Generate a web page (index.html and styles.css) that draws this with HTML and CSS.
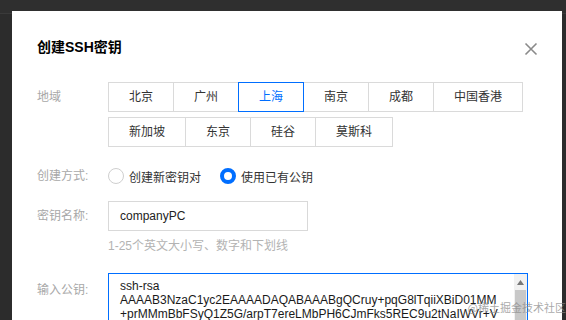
FILE: index.html
```html
<!DOCTYPE html>
<html lang="zh-CN">
<head>
<meta charset="utf-8">
<link rel="stylesheet" href="styles.css">
</head>
<body>
<div class="topstrip"></div>
<div class="dialog">
  <div class="title">创建SSH密钥</div>
  <svg class="close" width="14" height="14" viewBox="0 0 14 14"><path d="M1.5 1.5L12.5 12.5M12.5 1.5L1.5 12.5" stroke="#8a8a8a" stroke-width="1.6" fill="none"/></svg>

  <div class="row region-row">
    <div class="label">地域</div>
    <div class="regions">
      <div class="rline">
        <span class="rbtn">北京</span><span class="rbtn">广州</span><span class="rbtn active">上海</span><span class="rbtn">南京</span><span class="rbtn">成都</span><span class="rbtn">中国香港</span>
      </div>
      <div class="rline">
        <span class="rbtn">新加坡</span><span class="rbtn">东京</span><span class="rbtn">硅谷</span><span class="rbtn">莫斯科</span>
      </div>
    </div>
  </div>

  <div class="row radio-row">
    <div class="label">创建方式:</div>
    <div class="radios">
      <span class="radio"></span><span class="rtext">创建新密钥对</span>
      <span class="radio checked"></span><span class="rtext">使用已有公钥</span>
    </div>
  </div>

  <div class="row name-row">
    <div class="label">密钥名称:</div>
    <div class="input">companyPC</div>
  </div>
  <div class="hint">1-25个英文大小写、数字和下划线</div>

  <div class="row key-row">
    <div class="label key-label">输入公钥:</div>
    <div class="textarea">
      <div class="ta-text">
        <div>ssh-rsa</div>
        <div>AAAAB3NzaC1yc2EAAAADAQABAAABgQCruy+pqG8lTqiiXBiD01MM</div>
        <div>+prMMmBbFSyQ1Z5G/arpT7ereLMbPH6CJmFks5REC9u2tNaIWVr+V</div>
      </div>
      <div class="scrollbar">
        <div class="sb-btn"><svg width="7" height="5" viewBox="0 0 7 5"><path d="M0 5L3.5 0L7 5Z" fill="#777"/></svg></div>
        <div class="sb-thumb"></div>
      </div>
    </div>
  </div>
</div>
<div class="watermark">@稀土掘金技术社区</div>
</body>
</html>
```

FILE: styles.css
```css
html, body {
  margin: 0;
  padding: 0;
}
body {
  width: 566px;
  height: 320px;
  overflow: hidden;
  background: #2c2c2c;
  font-family: "Liberation Sans", Arial, "Noto Sans CJK SC", sans-serif;
  font-size: 12px;
  color: #333;
  position: relative;
}
.topstrip {
  height: 13px;
  background: #2f2f2f;
  border-bottom: 1px solid #3a3a3a;
  margin-bottom: -14px;
}
.dialog {
  position: relative;
  margin: 11px 0 0 12px;
  width: 550px;
  height: 309px;
  overflow: hidden;
  background: #fff;
  padding: 26px 0 0 25px;
  box-sizing: border-box;
}
.title {
  font-size: 14px;
  font-weight: bold;
  line-height: 20px;
  height: 20px;
  color: #000;
}
.close {
  position: absolute;
  right: 24px;
  top: 31px;
}
.row {
  display: flex;
  align-items: flex-start;
}
.label {
  width: 71px;
  flex: none;
  color: #a8a8a8;
  line-height: 30px;
  font-size: 12px;
}
.region-row {
  margin-top: 25px;
}
.regions {
  display: flex;
  flex-direction: column;
  gap: 5px;
}
.rline {
  display: flex;
}
.rbtn {
  display: block;
  height: 30px;
  line-height: 28px;
  box-sizing: border-box;
  border: 1px solid #dadada;
  padding: 0 20px;
  min-width: 66px;
  text-align: center;
  color: #333;
  margin-right: -1px;
  background: #fff;
  white-space: nowrap;
}
.rbtn.active {
  border-color: #006eff;
  color: #006eff;
  position: relative;
  z-index: 1;
}
.radio-row {
  margin-top: 14px;
}
.radios {
  display: flex;
  align-items: center;
  height: 30px;
}
.radio {
  width: 16px;
  height: 16px;
  box-sizing: border-box;
  border: 1px solid #cfcfcf;
  border-radius: 50%;
  margin-right: 5px;
}
.radio.checked {
  border: 4.5px solid #006eff;
}
.rtext {
  color: #333;
  margin-right: 19px;
}
.name-row {
  margin-top: 10px;
}
.input {
  width: 200px;
  height: 30px;
  box-sizing: border-box;
  border: 1px solid #d9d9d9;
  padding-left: 11px;
  line-height: 28px;
  color: #222;
}
.hint {
  margin: 6px 0 0 71px;
  line-height: 18px;
  color: #b3b3b3;
}
.key-row {
  margin-top: 18px;
}
.key-label {
  line-height: 18px;
  margin-top: 8px;
}
.textarea {
  width: 420px;
  height: 80px;
  box-sizing: border-box;
  border: 1px solid #006eff;
  display: flex;
  overflow: hidden;
}
.ta-text {
  flex: 1;
  padding: 5px 0 0 11px;
  line-height: 14px;
  color: #1a1a1a;
  white-space: nowrap;
  overflow: hidden;
}
.scrollbar {
  width: 13px;
  flex: none;
  background: #f1f1f1;
  display: flex;
  flex-direction: column;
}
.sb-btn {
  height: 16px;
  display: flex;
  align-items: center;
  justify-content: center;
  background: #f1f1f1;
}
.sb-thumb {
  flex: 1;
  margin: 0 1px;
  background: #c8c8c8;
}
.watermark {
  position: absolute;
  right: 0;
  bottom: 6px;
  font-family: "Noto Sans CJK SC", sans-serif;
  font-size: 11px;
  line-height: 14px;
  color: rgba(140, 140, 140, 0.75);
}
```
